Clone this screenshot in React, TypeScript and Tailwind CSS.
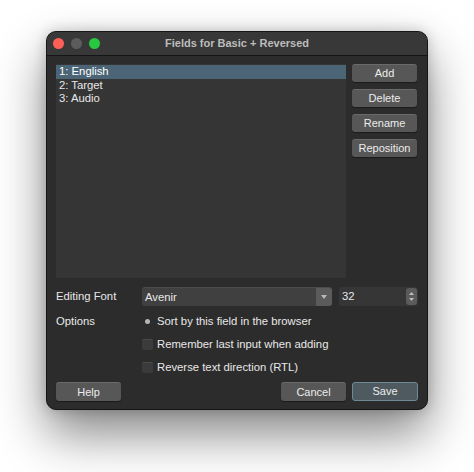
import type { ReactNode } from "react";

const fields = ["1: English", "2: Target", "3: Audio"];
const sideButtons = ["Add", "Delete", "Rename", "Reposition"];

function MacButton({
  children,
  className = "",
  primary = false,
}: {
  children: ReactNode;
  className?: string;
  primary?: boolean;
}) {
  return (
    <button
      className={`flex items-center justify-center rounded-[3px] text-[11px] text-[#ececec] ${
        primary
          ? "border border-[#6d8a97] bg-[#4f5a60]"
          : "border-t border-t-[#6a6a6a] bg-[#575757] shadow-[0_1px_1px_rgba(0,0,0,0.4)]"
      } ${className}`}
    >
      {children}
    </button>
  );
}

function Checkbox({ label }: { label: string }) {
  return (
    <div className="flex h-[20px] items-center gap-[4px]">
      <span className="h-[11px] w-[11px] rounded-[2px] border-t border-t-[#4a4a4a] bg-[#3b3b3b]" />
      <span>{label}</span>
    </div>
  );
}

export default function App() {
  return (
    <div
      className="h-[472px] w-[474px] bg-white pl-[46px] pt-[31px]"
      style={{ fontFamily: '"Liberation Sans", Arial, sans-serif' }}
    >
      <div className="flex h-[379px] w-[382px] flex-col overflow-hidden rounded-[10px] border border-[#161616] bg-[#2c2c2c] text-[11.3px] text-[#e8e8e8] shadow-[0_24px_50px_rgba(0,0,0,0.48),0_0_14px_rgba(0,0,0,0.2)]">
        {/* title bar */}
        <div className="relative flex h-[24px] shrink-0 items-center justify-center border-b border-[#151515] bg-[#383838]">
          <div className="absolute left-[6px] top-[6px] flex gap-[7px]">
            <span className="h-[11px] w-[11px] rounded-full bg-[#fe5f57]" />
            <span className="h-[11px] w-[11px] rounded-full bg-[#5c5c5c]" />
            <span className="h-[11px] w-[11px] rounded-full bg-[#28c840]" />
          </div>
          <span className="text-[11px] font-bold text-[#bdbdbd]">
            Fields for Basic + Reversed
          </span>
        </div>

        <div className="flex flex-1 flex-col px-[9px] pb-[8px] pt-[8px]">
          <div className="flex gap-[6px]">
            <ul className="h-[214px] w-[290px] bg-[#353535] pt-[1px]">
              {fields.map((f, i) => (
                <li
                  key={f}
                  className={`flex h-[13.5px] items-center px-[3px] ${
                    i === 0 ? "bg-[#4b6576] text-white" : ""
                  }`}
                >
                  {f}
                </li>
              ))}
            </ul>
            <div className="flex w-[65px] flex-col gap-[7px]">
              {sideButtons.map((b) => (
                <MacButton key={b} className="h-[18px] w-full">
                  {b}
                </MacButton>
              ))}
            </div>
          </div>

          {/* editing font */}
          <div className="mt-[9px] flex h-[19px] items-center">
            <span className="w-[86px]">Editing Font</span>
            <div className="flex h-[19px] w-[190px] items-stretch overflow-hidden rounded-[3px] border-t border-t-[#4c4c4c] bg-[#404040]">
              <span className="flex flex-1 items-center pl-[3px]">Avenir</span>
              <span className="flex w-[16px] items-center justify-center bg-[#5b5b5b]">
                <svg width="6" height="4" viewBox="0 0 6 4">
                  <path d="M0 0h6L3 4z" fill="#b9b9b9" />
                </svg>
              </span>
            </div>
            <div className="ml-[7px] flex h-[19px] w-[79px] items-center rounded-[2px] bg-[#363636] pr-[1px]">
              <span className="flex-1 pl-[3px]">32</span>
              <span className="flex h-[17px] w-[11px] flex-col items-center justify-center gap-[3px] rounded-[3px] bg-[#5b5b5b]">
                <svg width="5" height="3" viewBox="0 0 5 3">
                  <path d="M0 3h5L2.5 0z" fill="#bdbdbd" />
                </svg>
                <svg width="5" height="3" viewBox="0 0 5 3">
                  <path d="M0 0h5L2.5 3z" fill="#bdbdbd" />
                </svg>
              </span>
            </div>
          </div>

          {/* options */}
          <div className="mt-[5px] flex">
            <span className="flex h-[20px] w-[86px] items-center">Options</span>
            <div className="flex flex-col gap-[3px]">
              <div className="flex h-[20px] items-center gap-[4px]">
                <span className="flex h-[11px] w-[11px] items-center justify-center rounded-full">
                  <span className="h-[5px] w-[5px] rounded-full bg-[#b5b5b5]" />
                </span>
                <span>Sort by this field in the browser</span>
              </div>
              <Checkbox label="Remember last input when adding" />
              <Checkbox label="Reverse text direction (RTL)" />
            </div>
          </div>

          {/* footer */}
          <div className="mt-[5px] flex h-[19px] items-stretch">
            <MacButton className="w-[65px]">Help</MacButton>
            <div className="flex-1" />
            <MacButton className="w-[65px]">Cancel</MacButton>
            <MacButton primary className="ml-[6px] w-[66px]">
              Save
            </MacButton>
          </div>
        </div>
      </div>
    </div>
  );
}
